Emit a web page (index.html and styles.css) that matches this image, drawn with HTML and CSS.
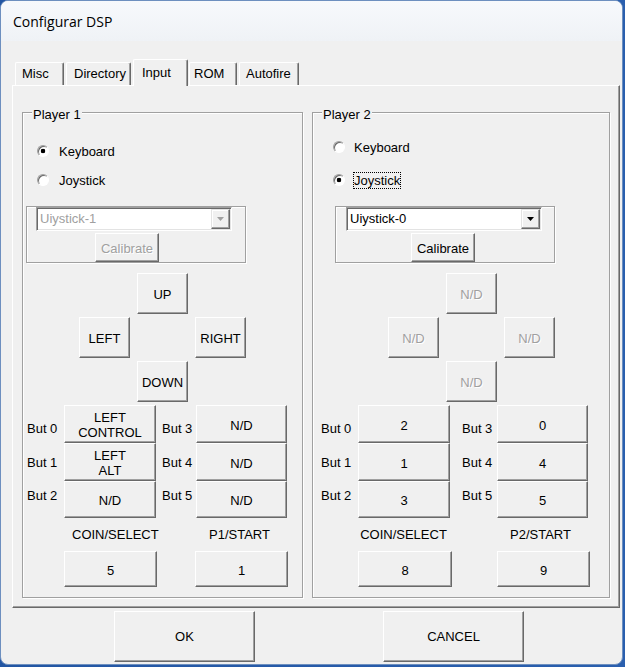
FILE: index.html
```html
<!DOCTYPE html>
<html lang="es">
<head>
<meta charset="utf-8">
<title>Configurar DSP</title>
<link rel="stylesheet" href="styles.css">
</head>
<body>
<div class="window">
  <div class="titlebar">Configurar DSP</div>
  <div class="client">
    <div class="tabs">
      <div class="tab tab-misc">Misc</div>
      <div class="tab tab-dir">Directory</div>
      <div class="tab tab-input active">Input</div>
      <div class="tab tab-rom">ROM</div>
      <div class="tab tab-auto">Autofire</div>
    </div>
    <div class="panel">
      <fieldset class="group p1">
        <legend>Player 1</legend>
        <div class="gbody">
          <div class="radio r-key"><span class="dot checked"></span><span class="rlabel">Keyboard</span></div>
          <div class="radio r-joy"><span class="dot"></span><span class="rlabel">Joystick</span></div>
          <div class="joybox">
            <div class="combo off">
              <span class="combo-text">Uiystick-1</span>
              <span class="combo-btn"><svg class="arrow" width="7" height="4" viewBox="0 0 7 4"><path d="M0 0H7L3.5 4Z"/></svg></span>
            </div>
            <div class="btn calib off">Calibrate</div>
          </div>
          <div class="dpad">
            <div class="btn up">UP</div>
            <div class="btn left">LEFT</div>
            <div class="btn right">RIGHT</div>
            <div class="btn down">DOWN</div>
          </div>
          <div class="buttons">
            <div class="blabel c0 r0">But 0</div><div class="btn">LEFT<br>CONTROL</div>
            <div class="blabel c2 r0">But 3</div><div class="btn">N/D</div>
            <div class="blabel c0 r1">But 1</div><div class="btn">LEFT<br>ALT</div>
            <div class="blabel c2 r1">But 4</div><div class="btn">N/D</div>
            <div class="blabel c0 r2">But 2</div><div class="btn">N/D</div>
            <div class="blabel c2 r2">But 5</div><div class="btn">N/D</div>
          </div>
          <div class="coin">
            <div class="coin-cell"><div class="coin-label cl-coin">COIN/SELECT</div><div class="btn coin-btn">5</div></div>
            <div class="coin-cell"><div class="coin-label cl-start">P1/START</div><div class="btn coin-btn">1</div></div>
          </div>
        </div>
      </fieldset>
      <fieldset class="group p2">
        <legend>Player 2</legend>
        <div class="gbody">
          <div class="radio r-key"><span class="dot"></span><span class="rlabel">Keyboard</span></div>
          <div class="radio r-joy"><span class="dot checked"></span><span class="rlabel focus">Joystick</span></div>
          <div class="joybox">
            <div class="combo">
              <span class="combo-text">Uiystick-0</span>
              <span class="combo-btn"><svg class="arrow" width="7" height="4" viewBox="0 0 7 4"><path d="M0 0H7L3.5 4Z"/></svg></span>
            </div>
            <div class="btn calib">Calibrate</div>
          </div>
          <div class="dpad">
            <div class="btn up off">N/D</div>
            <div class="btn left off">N/D</div>
            <div class="btn right off">N/D</div>
            <div class="btn down off">N/D</div>
          </div>
          <div class="buttons">
            <div class="blabel c0 r0">But 0</div><div class="btn">2</div>
            <div class="blabel c2 r0">But 3</div><div class="btn">0</div>
            <div class="blabel c0 r1">But 1</div><div class="btn">1</div>
            <div class="blabel c2 r1">But 4</div><div class="btn">4</div>
            <div class="blabel c0 r2">But 2</div><div class="btn">3</div>
            <div class="blabel c2 r2">But 5</div><div class="btn">5</div>
          </div>
          <div class="coin">
            <div class="coin-cell"><div class="coin-label cl-coin">COIN/SELECT</div><div class="btn coin-btn">8</div></div>
            <div class="coin-cell"><div class="coin-label cl-start">P2/START</div><div class="btn coin-btn">9</div></div>
          </div>
        </div>
      </fieldset>
    </div>
    <div class="footer">
      <div class="btn big">OK</div>
      <div class="btn big">CANCEL</div>
    </div>
  </div>
</div>
</body>
</html>
```
FILE: styles.css
```css
* { box-sizing: border-box; }
html, body { margin: 0; padding: 0; }
body {
  width: 625px;
  height: 667px;
  overflow: hidden;
  background: linear-gradient(90deg, #2356a3, #2a5fae);
  font-family: "Liberation Sans", Arial, sans-serif;
  font-size: 13px;
  line-height: 15px;
  color: #000;
}
.window {
  width: 623px;
  height: 665px;
  background: #f0f0f0;
  border: 1px solid #6d8fbf;
  border-radius: 8px;
  overflow: hidden;
}
.titlebar {
  height: 40px;
  padding-left: 12px;
  display: flex;
  align-items: center;
  font-family: "Open Sans", "Noto Sans", sans-serif;
  font-size: 14px;
  color: #000;
  background: linear-gradient(#f7f9fc, #eff2f6);
}
.client { padding: 18px 0 0 11px; }

/* tabs */
.tabs {
  display: flex;
  align-items: flex-end;
  height: 26px;
  padding-left: 3px;
}
.tab {
  height: 23px;
  margin-right: 2px;
  padding-top: 3px;
  text-align: left;
  background: #f0f0f0;
  border-top: 1px solid #fff;
  border-left: 1px solid #fff;
  border-right: 1px solid #696969;
  border-radius: 2px 2px 0 0;
  box-shadow: inset -1px 0 0 #a0a0a0;
}
.tab.active {
  height: 27px;
  margin-bottom: -1px;
  padding-top: 5px;
  position: relative;
  z-index: 1;
}
.tab-misc { width: 49px; padding-left: 6px; }
.tab-dir { width: 65px; padding-left: 7px; }
.tab-input { width: 55px; margin-right: 1px; padding-left: 8px; }
.tab-rom { width: 48px; padding-left: 4px; }
.tab-auto { width: 60px; padding-left: 6px; }

/* tab page */
.panel {
  display: flex;
  gap: 9px;
  width: 608px;
  height: 523px;
  padding: 17px 9px 9px 9px;
  border: 1px solid;
  border-color: #fff #696969 #696969 #fff;
  box-shadow: inset -1px -1px 0 #a0a0a0;
}

/* group boxes */
.group {
  margin: 0;
  padding: 0;
  min-width: 0;
  border: 1px solid #a0a0a0;
  box-shadow: 1px 1px 0 #fff, inset 1px 1px 0 #fff;
}
.p1 { width: 281px; }
.p2 { width: 298px; }
.group legend {
  margin-left: 9px;
  padding: 4px 1px 0;
  line-height: 15px;
  background: #f0f0f0;
}
.gbody {
  display: flex;
  flex-direction: column;
  align-items: flex-start;
}

/* radios */
.radio {
  display: flex;
  align-items: center;
  height: 16px;
}
.p1 .r-key { margin-top: 21px; }
.p1 .r-joy { margin-top: 13px; }
.p2 .r-key { margin-top: 17px; }
.p2 .r-joy { margin-top: 17px; }
.dot {
  width: 12px;
  height: 12px;
  border-radius: 50%;
  border: 1px solid;
  border-color: #a0a0a0 #fff #fff #a0a0a0;
  background: #fff;
  box-shadow: inset 1px 1px 0 #696969;
}
.dot.checked {
  background: radial-gradient(circle at 50% 50%, #000 0 2px, #fff 2.6px);
}
.p1 .dot { margin-left: 14px; }
.p2 .dot { margin-left: 20px; }
.rlabel { padding: 1px 1px; }
.p1 .rlabel { margin-left: 9px; }
.p2 .rlabel { margin-left: 8px; }
.rlabel.focus { outline: 1px dotted #000; outline-offset: -1px; }

/* joystick box */
.joybox {
  display: flex;
  flex-direction: column;
  align-items: flex-start;
  margin-top: 18px;
  width: 220px;
  height: 57px;
  padding-left: 9px;
  border: 1px solid #a0a0a0;
  box-shadow: inset 1px 1px 0 #fff, 1px 1px 0 #fff;
}
.p1 .joybox { margin-left: 3px; }
.p2 .joybox { margin-left: 22px; padding-left: 10px; }
.combo {
  display: flex;
  align-items: stretch;
  width: 196px;
  height: 24px;
  padding: 1px 1px 1px 3px;
  background: #fff;
  border: 1px solid;
  border-color: #a0a0a0 #fff #fff #a0a0a0;
  box-shadow: inset 1px 1px 0 #696969, inset -1px -1px 0 #e3e3e3;
}
.combo-text {
  flex: 1;
  display: flex;
  align-items: center;
}
.combo.off .combo-text { color: #a0a0a0; }
.combo-btn {
  width: 19px;
  display: flex;
  align-items: center;
  justify-content: center;
  background: #f0f0f0;
  border: 1px solid;
  border-color: #e3e3e3 #696969 #696969 #e3e3e3;
  box-shadow: inset -1px -1px 0 #a0a0a0, inset 1px 1px 0 #fff;
}
.arrow { fill: #000; }
.combo.off .arrow { fill: #a0a0a0; }
.calib {
  width: 64px;
  height: 30px;
  margin-top: 2px;
  padding-top: 0;
}
.p1 .calib { margin-left: 59px; }
.p2 .calib { margin-left: 65px; }

/* generic push button */
.btn {
  display: flex;
  align-items: center;
  justify-content: center;
  text-align: center;
  padding-top: 2px;
  line-height: 15px;
  background: #f0f0f0;
  border: 1px solid;
  border-color: #fff #696969 #696969 #fff;
  box-shadow: inset -1px -1px 0 #a0a0a0;
}
.btn.off { color: #a0a0a0; text-shadow: 1px 1px 0 #fff; }

/* d-pad */
.dpad {
  display: grid;
  grid-template-columns: repeat(3, 51px);
  grid-template-rows: repeat(3, 41px);
  column-gap: 7px;
  row-gap: 3px;
  grid-template-areas:
    ". up ."
    "left . right"
    ". down .";
  margin-top: 10px;
}
.p1 .dpad { margin-left: 56px; }
.p2 .dpad { margin-left: 75px; }
.up { grid-area: up; }
.left { grid-area: left; }
.right { grid-area: right; }
.down { grid-area: down; }

/* button mapping grid */
.buttons {
  display: grid;
  grid-template-rows: 38px 38px 37px;
  margin-top: 3px;
}
.p1 .buttons { grid-template-columns: 41px 92px 40px 91px; }
.p2 .buttons { grid-template-columns: 45px 92px 47px 91px; }
.blabel { white-space: nowrap; }
.blabel.r0 { padding-top: 16px; }
.blabel.r1 { padding-top: 12px; }
.blabel.r2 { padding-top: 7px; }
.p1 .c0 { padding-left: 4px; }
.p1 .c2 { padding-left: 6px; }
.p2 .c0 { padding-left: 8px; }
.p2 .c2 { padding-left: 12px; }

/* coin / start */
.coin {
  display: grid;
  margin-top: 9px;
}
.p1 .coin { grid-template-columns: 93px 93px; column-gap: 38px; margin-left: 41px; }
.p2 .coin { grid-template-columns: 94px 93px; column-gap: 45px; margin-left: 45px; }
.coin-label {
  height: 16px;
  line-height: 16px;
  text-align: center;
  white-space: nowrap;
}
.p1 .cl-coin { padding-left: 8px; }
.p1 .cl-start { padding-right: 4px; }
.p2 .cl-coin { padding-right: 3px; }
.p2 .cl-start { padding-right: 6px; }
.coin-btn {
  height: 36px;
  margin-top: 8px;
}

/* dialog buttons */
.footer {
  display: flex;
  gap: 128px;
  margin-top: 3px;
  padding-left: 102px;
}
.btn.big {
  width: 141px;
  height: 51px;
  padding-top: 0;
}
```
